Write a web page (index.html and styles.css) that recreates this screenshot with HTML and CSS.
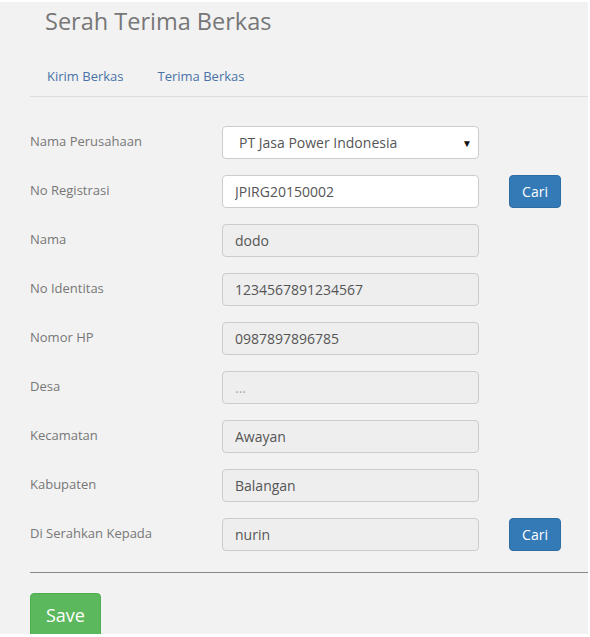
FILE: index.html
```html
<!DOCTYPE html>
<html>
<head>
<meta charset="utf-8">
<link rel="stylesheet" href="styles.css">
</head>
<body>
<div class="page">
  <h1 class="title">Serah Terima Berkas</h1>
  <ul class="tabs">
    <li><a href="#">Kirim Berkas</a></li>
    <li><a href="#">Terima Berkas</a></li>
  </ul>
  <form class="form">
    <div class="row">
      <label class="label">Nama Perusahaan</label>
      <div class="select-wrap">
        <select class="control select"><option>PT Jasa Power Indonesia</option></select>
        <span class="arrow">&#9660;</span>
      </div>
    </div>
    <div class="row">
      <label class="label">No Registrasi</label>
      <input class="control" type="text" value="JPIRG20150002">
      <button type="button" class="btn btn-primary">Cari</button>
    </div>
    <div class="row">
      <label class="label">Nama</label>
      <input class="control" type="text" value="dodo" readonly>
    </div>
    <div class="row">
      <label class="label">No Identitas</label>
      <input class="control" type="text" value="1234567891234567" readonly>
    </div>
    <div class="row">
      <label class="label">Nomor HP</label>
      <input class="control" type="text" value="0987897896785" readonly>
    </div>
    <div class="row">
      <label class="label">Desa</label>
      <input class="control" type="text" placeholder="..." readonly>
    </div>
    <div class="row">
      <label class="label">Kecamatan</label>
      <input class="control" type="text" value="Awayan" readonly>
    </div>
    <div class="row">
      <label class="label">Kabupaten</label>
      <input class="control" type="text" value="Balangan" readonly>
    </div>
    <div class="row">
      <label class="label">Di Serahkan Kepada</label>
      <input class="control" type="text" value="nurin" readonly>
      <button type="button" class="btn btn-primary">Cari</button>
    </div>
    <hr class="sep">
    <button type="button" class="btn btn-success">Save</button>
  </form>
</div>
</body>
</html>
```
FILE: styles.css
```css
html, body {
  margin: 0;
  padding: 0;
  background: #ffffff;
}
body {
  font-family: "Open Sans", "Noto Sans", sans-serif;
  color: #777;
  overflow: hidden;
}
.page {
  margin: 2px 2px 0 0;
  background: #f2f2f2;
  height: 632px;
  overflow: hidden;
}
.title {
  margin: 0;
  padding: 4px 0 0 45px;
  font-size: 23.5px;
  font-weight: 400;
  line-height: 30px;
  color: #777;
}
.tabs {
  list-style: none;
  margin: 20px 0 0 30px;
  padding: 0;
  display: flex;
  border-bottom: 1px solid #dddddd;
  height: 40px;
}
.tabs li {
  display: flex;
  align-items: center;
}
.tabs a {
  display: block;
  padding: 0 17px;
  font-size: 13px;
  line-height: 40px;
  color: #4a72a8;
  text-decoration: none;
}
.form {
  margin: 29px 0 0 30px;
}
.row {
  display: flex;
  align-items: center;
  height: 33px;
  margin-bottom: 16px;
}
.label {
  width: 192px;
  font-size: 13px;
  color: #777;
  padding-bottom: 3px;
}
.control {
  box-sizing: border-box;
  width: 257px;
  height: 33px;
  padding: 0 12px;
  border: 1px solid #cccccc;
  border-radius: 4px;
  background: #eeeeee;
  font-family: inherit;
  font-size: 14px;
  color: #555;
  outline: none;
}
.control::placeholder {
  color: #aaa;
}
.control:not([readonly]) {
  background: #ffffff;
}
.select-wrap {
  position: relative;
  width: 257px;
  height: 33px;
}
.select {
  appearance: none;
  -webkit-appearance: none;
  padding-left: 16px;
  background: #ffffff;
}
.arrow {
  position: absolute;
  right: 7px;
  top: 10px;
  font-size: 10px;
  color: #111;
  pointer-events: none;
}
.btn {
  box-sizing: border-box;
  font-family: inherit;
  border-radius: 4px;
  color: #ffffff;
  cursor: pointer;
}
.btn-primary {
  margin-left: 30px;
  width: 52px;
  height: 33px;
  padding: 0;
  font-size: 14px;
  background: #337ab7;
  border: 1px solid #2e6da4;
}
.btn-success {
  width: 71px;
  height: 46px;
  padding: 0 0 2px 0;
  font-size: 18px;
  background: #5cb85c;
  border: 1px solid #4cae4c;
}
.sep {
  margin: 21px 0 20px 0;
  border: 0;
  border-top: 1px solid #888888;
  height: 0;
}
```
